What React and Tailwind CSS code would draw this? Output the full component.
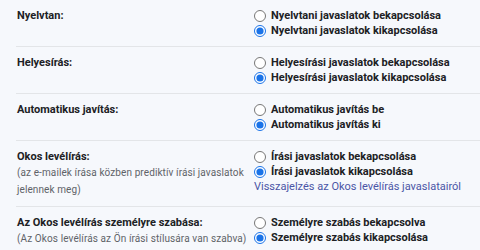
const sections = [
  {
    label: "Nyelvtan:",
    name: "grammar",
    options: ["Nyelvtani javaslatok bekapcsolása", "Nyelvtani javaslatok kikapcsolása"],
  },
  {
    label: "Helyesírás:",
    name: "spelling",
    options: ["Helyesírási javaslatok bekapcsolása", "Helyesírási javaslatok kikapcsolása"],
  },
  {
    label: "Automatikus javítás:",
    name: "autocorrect",
    options: ["Automatikus javítás be", "Automatikus javítás ki"],
  },
  {
    label: "Okos levélírás:",
    note: "(az e-mailek írása közben prediktív írási javaslatok jelennek meg)",
    name: "smartcompose",
    options: ["Írási javaslatok bekapcsolása", "Írási javaslatok kikapcsolása"],
    link: "Visszajelzés az Okos levélírás javaslatairól",
  },
  {
    label: "Az Okos levélírás személyre szabása:",
    note: "(Az Okos levélírás az Ön írási stílusára van szabva)",
    name: "personal",
    options: ["Személyre szabás bekapcsolva", "Személyre szabás kikapcsolása"],
  },
];

const Section = ({ section, last }) => {
  return (
    <div
      className={`ml-4 grid grid-cols-[238px_1fr] pt-2 pb-2 ${
        last ? "" : "border-b border-[#e3e5e8]"
      }`}
    >
      <div className="pl-px">
        <div className="text-[11px] leading-[15px] font-bold text-[#202124]">
          {section.label}
        </div>
        {section.note && (
          <div className="text-[10px] leading-[17px] tracking-[0.1px] text-[#5f6368]">
            {section.note}
          </div>
        )}
      </div>
      <div className="flex flex-col">
        {section.options.map((opt, i) => (
          <label key={opt} className="flex items-center gap-[5px] h-[15px]">
            <input
              type="radio"
              name={section.name}
              defaultChecked={i === 1}
              className="m-0 w-[12px] h-[12px] accent-[#1a73e8]"
            />
            <span className="text-[11px] leading-[15px] font-bold text-[#202124]">
              {opt}
            </span>
          </label>
        ))}
        {section.link && (
          <a className="text-[11px] leading-[16px] text-[#4a55a6] cursor-pointer">
            {section.link}
          </a>
        )}
      </div>
    </div>
  );
};

export default function App() {
  return (
    <div
      className="w-[480px] h-[250px] overflow-hidden bg-[#f6f8fc]"
      style={{ fontFamily: "Roboto, Arial, sans-serif" }}
    >
      {sections.map((s, i) => (
        <Section key={s.name} section={s} last={i === sections.length - 1} />
      ))}
    </div>
  );
}
